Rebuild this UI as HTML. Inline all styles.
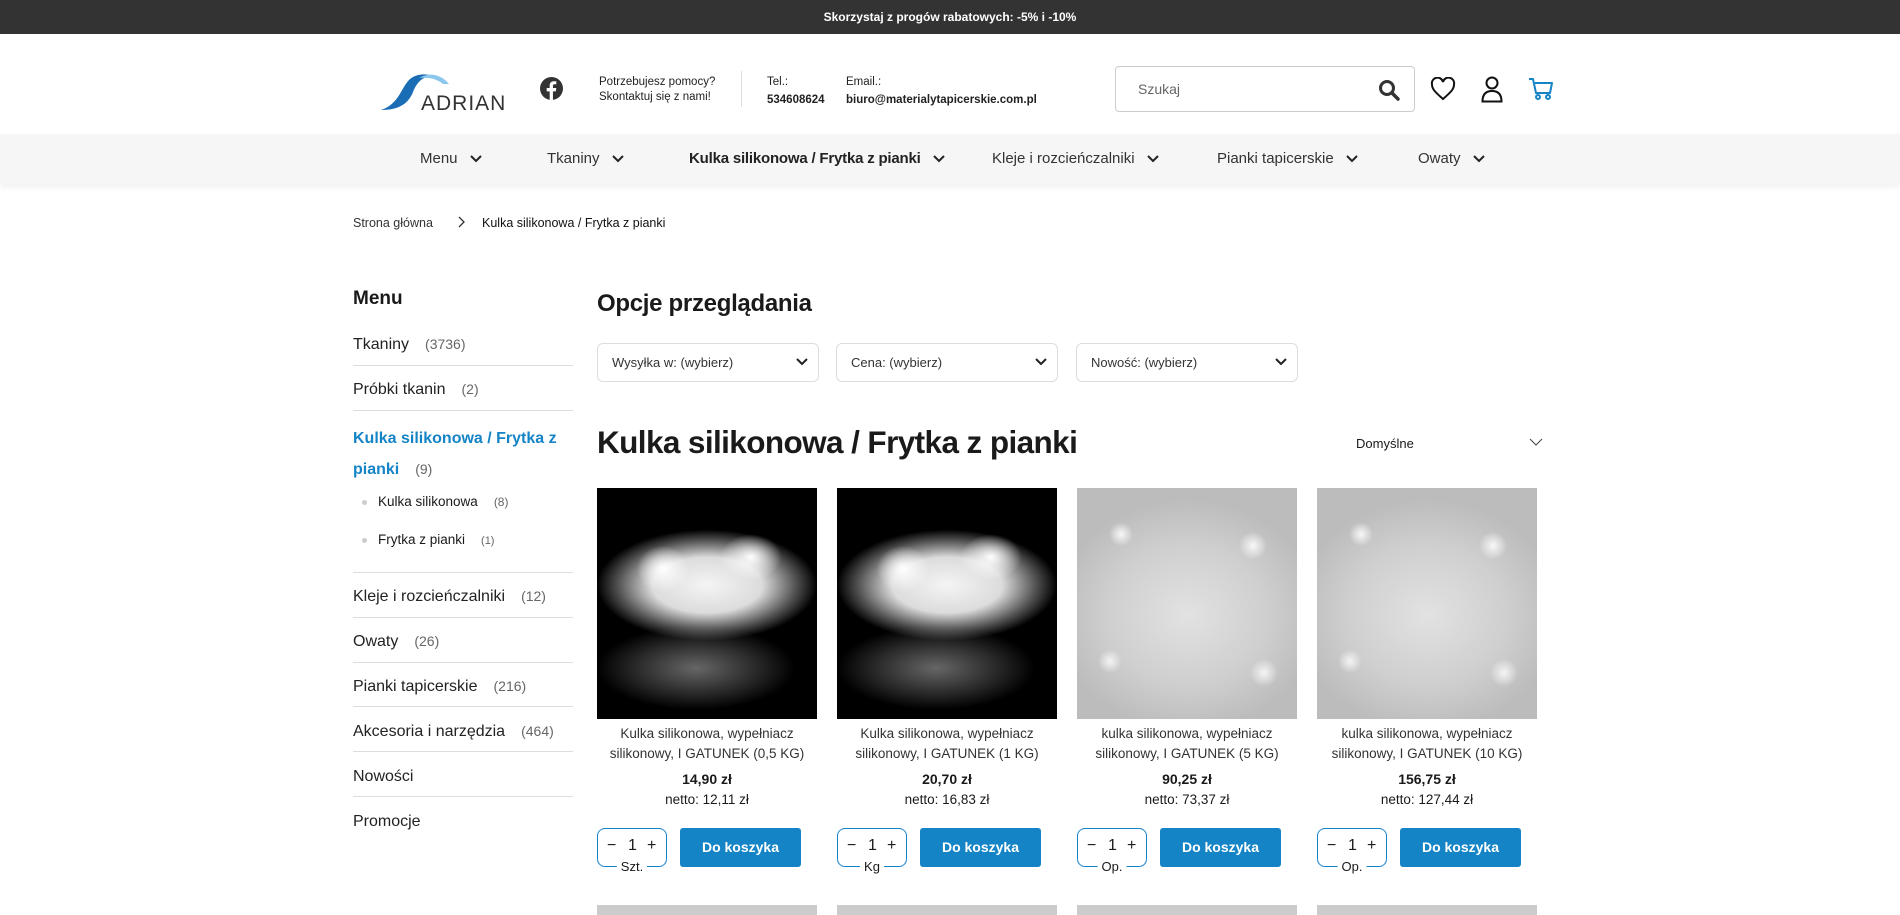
<!DOCTYPE html>
<html><head><meta charset="utf-8"><style>
*{margin:0;padding:0;box-sizing:border-box}
body{width:1900px;height:910px;overflow:hidden;background:#fff;font-family:"Liberation Sans",sans-serif;color:#1a1a1a;position:relative}
.a{position:absolute;white-space:nowrap}
.top{left:0;top:0;width:1900px;height:34px;background:#333;color:#fff;font-size:12px;font-weight:bold;text-align:center;line-height:34px}
.nav{left:0;top:134px;width:1900px;height:50px;background:#f6f6f6;box-shadow:0 3px 6px rgba(0,0,0,.06)}
.ni{top:150px;font-size:15px;color:#333}
.ni svg{margin-left:12px;vertical-align:middle}
.side{font-size:16px;color:#222}
.cnt{color:#666;font-size:14px;margin-left:16px}
.line{position:absolute;left:353px;width:220px;height:1px;background:#ddd}
.sel{top:343px;width:222px;height:39px;border:1px solid #ddd;border-radius:6px;font-size:13px;line-height:37px;padding-left:14px;color:#333}
.sel svg{position:absolute;right:10px;top:14px}
.img{top:488px;width:220px;height:231px}
.dark{background:radial-gradient(ellipse 12% 10% at 30% 35%,#fff 0%,rgba(255,255,255,0) 100%),radial-gradient(ellipse 14% 10% at 70% 30%,#fff 0%,rgba(255,255,255,0) 100%),radial-gradient(ellipse 50% 24% at 50% 42%,#f4f4f4 0%,#dcdcdc 50%,rgba(170,170,170,.5) 80%,rgba(0,0,0,0) 100%),radial-gradient(ellipse 45% 18% at 45% 78%,#666 0%,#2a2a2a 60%,#000 100%),#000}
.light{background:radial-gradient(circle 12px at 20% 20%,#f8f8f8,rgba(255,255,255,0)),radial-gradient(circle 14px at 80% 25%,#f8f8f8,rgba(255,255,255,0)),radial-gradient(circle 12px at 15% 75%,#f4f4f4,rgba(255,255,255,0)),radial-gradient(circle 14px at 85% 80%,#f4f4f4,rgba(255,255,255,0)),radial-gradient(ellipse 60% 50% at 50% 55%,#e2e2e2 0%,#cfcfcf 60%,#bcbcbc 100%)}
.t{top:724px;width:220px;text-align:center;font-size:13.5px;line-height:20px;color:#333;white-space:normal}
.p{top:771px;width:220px;text-align:center;font-size:14px;font-weight:bold}
.n{top:792px;width:220px;text-align:center;font-size:13.5px}
.q{top:828px;width:70px;height:39px;border:1.5px solid #1584c6;border-radius:8px;font-size:16px}
.q span{position:absolute;top:8px}
.q .u{top:30px;left:50%;transform:translateX(-50%);background:#fff;padding:0 4px;font-size:13px}
.b{top:828px;width:121px;height:39px;background:#1584c6;color:#fff;border-radius:3px;font-size:14px;font-weight:bold;text-align:center;line-height:39px}
.img2{top:905px;width:220px;height:10px;background:#ccc}
</style></head><body>
<div class="a top">Skorzystaj z progów rabatowych: -5% i -10%</div>
<svg class="a" style="left:379px;top:70px" width="135" height="42" viewBox="0 0 135 42"><path d="M2 40 C20 34,22 18,30 10 C36 4,46 3,54 6 C44 6,38 12,34 22 C30 32,22 40,2 40Z" fill="#1a6db5"/><path d="M40 8 C50 2,62 4,70 14 L64 14 C58 9,50 7,40 8Z" fill="#8cc8ee"/><text x="42" y="40" font-family="Liberation Sans" font-size="21" fill="#333" letter-spacing="1">ADRIAN</text></svg>
<svg class="a" style="left:540px;top:77px" width="23" height="23" viewBox="0 0 24 24"><circle cx="12" cy="12" r="12" fill="#333"/><path d="M13.5 24V15h3l.5-3.5h-3.5V9.3c0-1 .3-1.7 1.8-1.7H17V4.5c-.3 0-1.4-.1-2.6-.1-2.6 0-4.3 1.6-4.3 4.4v2.7H7V15h3.1v9z" fill="#fff"/></svg>
<div class="a" style="left:599px;top:75px;font-size:11.5px;line-height:15px;color:#222">Potrzebujesz pomocy?<br>Skontaktuj się z nami!</div>
<div class="a" style="left:741px;top:71px;width:1px;height:36px;background:#ddd"></div>
<div class="a" style="left:767px;top:73px;font-size:11.5px;line-height:18px;color:#222">Tel.:<br><b>534608624</b></div>
<div class="a" style="left:846px;top:73px;font-size:11.5px;line-height:18px;color:#222">Email.:<br><b>biuro@materialytapicerskie.com.pl</b></div>
<div class="a" style="left:1115px;top:66px;width:300px;height:46px;border:1px solid #ccc;border-radius:4px;font-size:14px;color:#666;line-height:44px;padding-left:22px">Szukaj</div>
<svg class="a" style="left:1378px;top:79px" width="22" height="22" viewBox="0 0 22 22"><circle cx="9" cy="9" r="6.5" fill="none" stroke="#333" stroke-width="3"/><path d="M14 14l6 6" stroke="#333" stroke-width="3.5" stroke-linecap="round"/></svg>
<svg class="a" style="left:1430px;top:77px" width="26" height="24" viewBox="0 0 26 24"><path d="M13 22 C5 15,2 12,2 7.5 A5.5 5.5 0 0 1 13 5 A5.5 5.5 0 0 1 24 7.5 C24 12,21 15,13 22Z" fill="none" stroke="#111" stroke-width="2"/></svg>
<svg class="a" style="left:1481px;top:76px" width="22" height="27" viewBox="0 0 22 27"><circle cx="11" cy="7" r="5.5" fill="none" stroke="#111" stroke-width="2"/><path d="M1.5 25.5 C1.5 18,5 15,11 15 C17 15,20.5 18,20.5 25.5Z" fill="none" stroke="#111" stroke-width="2"/></svg>
<svg class="a" style="left:1528px;top:77px" width="26" height="24" viewBox="0 0 26 24"><path d="M1 2h4l3 14h14l2-10H7" fill="none" stroke="#1584c6" stroke-width="2" stroke-linejoin="round"/><circle cx="10" cy="20" r="2" fill="none" stroke="#1584c6" stroke-width="2"/><circle cx="20" cy="20" r="2" fill="none" stroke="#1584c6" stroke-width="2"/></svg>
<div class="a nav"></div>
<div class="a ni" style="left:420px">Menu<svg width="12" height="8"><path d="M1 1l5 5 5-5" fill="none" stroke="#222" stroke-width="2"/></svg></div>
<div class="a ni" style="left:547px">Tkaniny<svg width="12" height="8"><path d="M1 1l5 5 5-5" fill="none" stroke="#222" stroke-width="2"/></svg></div>
<div class="a ni" style="left:689px;font-weight:bold;color:#222;letter-spacing:-.2px">Kulka silikonowa / Frytka z pianki<svg width="12" height="8"><path d="M1 1l5 5 5-5" fill="none" stroke="#222" stroke-width="2"/></svg></div>
<div class="a ni" style="left:992px">Kleje i rozcieńczalniki<svg width="12" height="8"><path d="M1 1l5 5 5-5" fill="none" stroke="#222" stroke-width="2"/></svg></div>
<div class="a ni" style="left:1217px">Pianki tapicerskie<svg width="12" height="8"><path d="M1 1l5 5 5-5" fill="none" stroke="#222" stroke-width="2"/></svg></div>
<div class="a ni" style="left:1418px">Owaty<svg width="12" height="8"><path d="M1 1l5 5 5-5" fill="none" stroke="#222" stroke-width="2"/></svg></div>
<div class="a" style="left:353px;top:216px;font-size:12.5px;color:#333">Strona główna</div>
<svg class="a" style="left:458px;top:216px" width="8" height="12"><path d="M1 1l5 5-5 5" fill="none" stroke="#333" stroke-width="1.3"/></svg>
<div class="a" style="left:482px;top:216px;font-size:12.5px;color:#111">Kulka silikonowa / Frytka z pianki</div>
<div class="a" style="left:353px;top:288px;font-size:19px;font-weight:bold">Menu</div>
<div class="a side" style="left:353px;top:336px">Tkaniny<span class="cnt">(3736)</span></div><div class="line" style="top:365px"></div>
<div class="a side" style="left:353px;top:381px">Próbki tkanin<span class="cnt">(2)</span></div><div class="line" style="top:410px"></div>
<div class="a side" style="left:353px;top:424px;color:#1584c6;font-weight:bold;line-height:30px">Kulka silikonowa / Frytka z<br>pianki<span class="cnt" style="font-weight:normal">(9)</span></div>
<div class="a" style="left:362px;top:500px;width:5px;height:5px;border-radius:50%;background:#ccc"></div>
<div class="a" style="left:378px;top:494px;font-size:13.5px">Kulka silikonowa<span class="cnt" style="font-size:12px">(8)</span></div>
<div class="a" style="left:362px;top:538px;width:5px;height:5px;border-radius:50%;background:#ccc"></div>
<div class="a" style="left:378px;top:532px;font-size:13.5px">Frytka z pianki<span class="cnt" style="font-size:11px">(1)</span></div>
<div class="line" style="top:572px"></div>
<div class="a side" style="left:353px;top:588px">Kleje i rozcieńczalniki<span class="cnt">(12)</span></div><div class="line" style="top:617px"></div>
<div class="a side" style="left:353px;top:633px">Owaty<span class="cnt">(26)</span></div><div class="line" style="top:662px"></div>
<div class="a side" style="left:353px;top:678px">Pianki tapicerskie<span class="cnt">(216)</span></div><div class="line" style="top:706px"></div>
<div class="a side" style="left:353px;top:723px">Akcesoria i narzędzia<span class="cnt">(464)</span></div><div class="line" style="top:751px"></div>
<div class="a side" style="left:353px;top:768px">Nowości</div><div class="line" style="top:796px"></div>
<div class="a side" style="left:353px;top:813px">Promocje</div>
<div class="a" style="left:597px;top:290px;font-size:24px;font-weight:bold;letter-spacing:-.3px">Opcje przeglądania</div>
<div class="a sel" style="left:597px">Wysyłka w: (wybierz)<svg width="12" height="8"><path d="M1 1l5 5 5-5" fill="none" stroke="#222" stroke-width="2"/></svg></div>
<div class="a sel" style="left:836px">Cena: (wybierz)<svg width="12" height="8"><path d="M1 1l5 5 5-5" fill="none" stroke="#222" stroke-width="2"/></svg></div>
<div class="a sel" style="left:1076px">Nowość: (wybierz)<svg width="12" height="8"><path d="M1 1l5 5 5-5" fill="none" stroke="#222" stroke-width="2"/></svg></div>
<div class="a" style="left:597px;top:424px;font-size:31.5px;font-weight:bold;letter-spacing:-.6px">Kulka silikonowa / Frytka z pianki</div>
<div class="a" style="left:1356px;top:436px;font-size:13px">Domyślne</div>
<svg class="a" style="left:1529px;top:438px" width="14" height="9"><path d="M1 1l6 6 6-6" fill="none" stroke="#444" stroke-width="1"/></svg>

<div class="a img dark" style="left:597px"></div>
<div class="a img dark" style="left:837px"></div>
<div class="a img light" style="left:1077px"></div>
<div class="a img light" style="left:1317px"></div>

<div class="a t" style="left:597px">Kulka silikonowa, wypełniacz silikonowy, I GATUNEK (0,5 KG)</div>
<div class="a t" style="left:837px">Kulka silikonowa, wypełniacz silikonowy, I GATUNEK (1 KG)</div>
<div class="a t" style="left:1077px">kulka silikonowa, wypełniacz silikonowy, I GATUNEK (5 KG)</div>
<div class="a t" style="left:1317px">kulka silikonowa, wypełniacz silikonowy, I GATUNEK (10 KG)</div>
<div class="a p" style="left:597px">14,90 zł</div><div class="a n" style="left:597px">netto: 12,11 zł</div>
<div class="a p" style="left:837px">20,70 zł</div><div class="a n" style="left:837px">netto: 16,83 zł</div>
<div class="a p" style="left:1077px">90,25 zł</div><div class="a n" style="left:1077px">netto: 73,37 zł</div>
<div class="a p" style="left:1317px">156,75 zł</div><div class="a n" style="left:1317px">netto: 127,44 zł</div>

<div class="a q" style="left:597px"><span style="left:9px">−</span><span style="left:30px">1</span><span style="left:49px">+</span><span class="u">Szt.</span></div>
<div class="a q" style="left:837px"><span style="left:9px">−</span><span style="left:30px">1</span><span style="left:49px">+</span><span class="u">Kg</span></div>
<div class="a q" style="left:1077px"><span style="left:9px">−</span><span style="left:30px">1</span><span style="left:49px">+</span><span class="u">Op.</span></div>
<div class="a q" style="left:1317px"><span style="left:9px">−</span><span style="left:30px">1</span><span style="left:49px">+</span><span class="u">Op.</span></div>
<div class="a b" style="left:680px">Do koszyka</div>
<div class="a b" style="left:920px">Do koszyka</div>
<div class="a b" style="left:1160px">Do koszyka</div>
<div class="a b" style="left:1400px">Do koszyka</div>
<div class="a img2" style="left:597px"></div><div class="a img2" style="left:837px"></div><div class="a img2" style="left:1077px"></div><div class="a img2" style="left:1317px"></div>
</body></html>
